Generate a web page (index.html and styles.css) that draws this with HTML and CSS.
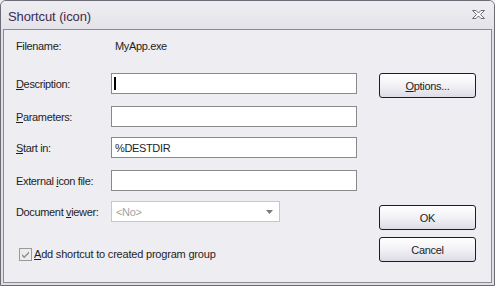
FILE: index.html
```html
<!DOCTYPE html>
<html>
<head>
<meta charset="utf-8">
<link rel="stylesheet" href="styles.css">
</head>
<body>
<div class="window">
  <div class="titlebar">
    <span class="title">Shortcut (icon)</span>
    <svg class="close" width="13" height="9" viewBox="0 0 13 9">
      <path d="M0.5 0.5 H4 L6.5 3 L9 0.5 H12.5 L8.5 4.5 L12.5 8.5 H9 L6.5 6 L4 8.5 H0.5 L4.5 4.5 Z" fill="#fafafc" stroke="#6a6a78" stroke-width="1"/>
    </svg>
  </div>
  <div class="client">
    <div class="form">
      <div class="row r-file">
        <span class="label">Filename:</span>
        <span class="value">MyApp.exe</span>
      </div>
      <div class="row r-desc">
        <span class="label"><u>D</u>escription:</span>
        <div class="field"><span class="caret"></span></div>
      </div>
      <div class="row r-params">
        <span class="label"><u>P</u>arameters:</span>
        <div class="field"></div>
      </div>
      <div class="row r-start">
        <span class="label"><u>S</u>tart in:</span>
        <div class="field">%DESTDIR</div>
      </div>
      <div class="row r-ext">
        <span class="label">External <u>i</u>con file:</span>
        <div class="field"></div>
      </div>
      <div class="row r-doc">
        <span class="label">Document <u>v</u>iewer:</span>
        <div class="combo">
          <span class="combo-text">&lt;No&gt;</span>
          <svg class="arrow" width="7" height="4" viewBox="0 0 7 4"><path d="M0 0 H7 L3.5 4 Z" fill="#7a7a7a"/></svg>
        </div>
      </div>
      <div class="check-row">
        <svg class="checkbox" width="13" height="13" viewBox="0 0 13 13">
          <rect x="0.5" y="0.5" width="12" height="12" fill="#ececec" stroke="#9a9a9a"/>
          <path d="M3 6 L5.2 8.3 L10 3.5 L10 5.5 L5.2 10.3 L3 8 Z" fill="#8e8e8e"/>
        </svg>
        <span class="check-label"><u>A</u>dd shortcut to created program group</span>
      </div>
    </div>
    <div class="buttons">
      <button class="btn b-options"><u>O</u>ptions...</button>
      <button class="btn b-ok">OK</button>
      <button class="btn b-cancel">Cancel</button>
    </div>
  </div>
</div>
</body>
</html>
```
FILE: styles.css
```css
html, body {
  margin: 0;
  padding: 0;
  background: #eeedf2;
}
body {
  font-family: "Liberation Sans", Arial, sans-serif;
  font-size: 11px;
  color: #1e1e1e;
}
.window {
  width: 495px;
  height: 286px;
  box-sizing: border-box;
  border: 1px solid #6c6c76;
  border-radius: 6px 6px 0 0;
  background: #dedee5;
  display: flex;
  flex-direction: column;
  overflow: hidden;
}
.titlebar {
  height: 28px;
  flex: none;
  background: linear-gradient(#eeeef2, #e3e3e9);
  display: flex;
  align-items: center;
  justify-content: space-between;
  padding: 0 9px 0 7px;
}
.title {
  font-size: 13px;
  color: #3a2c52;
  letter-spacing: -0.1px;
  margin-top: 2px;
}
.close {
  display: block;
  margin-top: -1px;
}
.client {
  flex: 1;
  margin: 0 2px 2px 2px;
  border: 1px solid #8b8b94;
  background: #eeedf2;
  display: flex;
  align-items: flex-start;
}
.form {
  padding: 5px 0 0 12px;
  display: flex;
  flex-direction: column;
}
.row {
  height: 21px;
  display: flex;
  align-items: center;
}
.label {
  width: 95px;
  flex: none;
  letter-spacing: -0.35px;
  white-space: nowrap;
}
.value {
  padding-left: 4px;
  letter-spacing: -0.35px;
}
.r-desc { margin-top: 17px; }
.r-params { margin-top: 12px; }
.r-start { margin-top: 10px; }
.r-ext { margin-top: 12px; }
.r-doc { margin-top: 10px; }
.field {
  width: 246px;
  height: 21px;
  box-sizing: border-box;
  border: 1px solid #8a8a8c;
  background: #fff;
  padding: 0 3px;
  display: flex;
  align-items: center;
  letter-spacing: -0.35px;
}
.caret {
  display: block;
  width: 2px;
  height: 13px;
  margin-left: -1px;
  background: #000;
}
.combo {
  width: 169px;
  height: 21px;
  box-sizing: border-box;
  border: 1px solid #c9c8bd;
  background: #fff;
  padding: 0 6px 0 4px;
  display: flex;
  align-items: center;
  justify-content: space-between;
}
.combo-text {
  color: #a3a3a3;
  letter-spacing: -0.35px;
}
.arrow { display: block; }
.check-row {
  margin-top: 25px;
  display: flex;
  align-items: center;
  padding-left: 3px;
  height: 14px;
}
.checkbox {
  display: block;
  flex: none;
}
.check-label {
  margin-left: 2px;
  letter-spacing: -0.2px;
}
.buttons {
  margin-left: 22px;
  padding-top: 43px;
  display: flex;
  flex-direction: column;
}
.btn {
  width: 97px;
  height: 25px;
  box-sizing: border-box;
  border: 1px solid #1e1e22;
  border-radius: 3px;
  background: linear-gradient(#ffffff 0%, #f3f3f7 45%, #dcdce6 100%);
  font-family: "Liberation Sans", Arial, sans-serif;
  font-size: 11px;
  color: #1e1e1e;
  letter-spacing: -0.3px;
  padding: 0;
  margin: 0;
}
.b-ok { margin-top: 107px; }
.b-cancel { margin-top: 7px; }
```
